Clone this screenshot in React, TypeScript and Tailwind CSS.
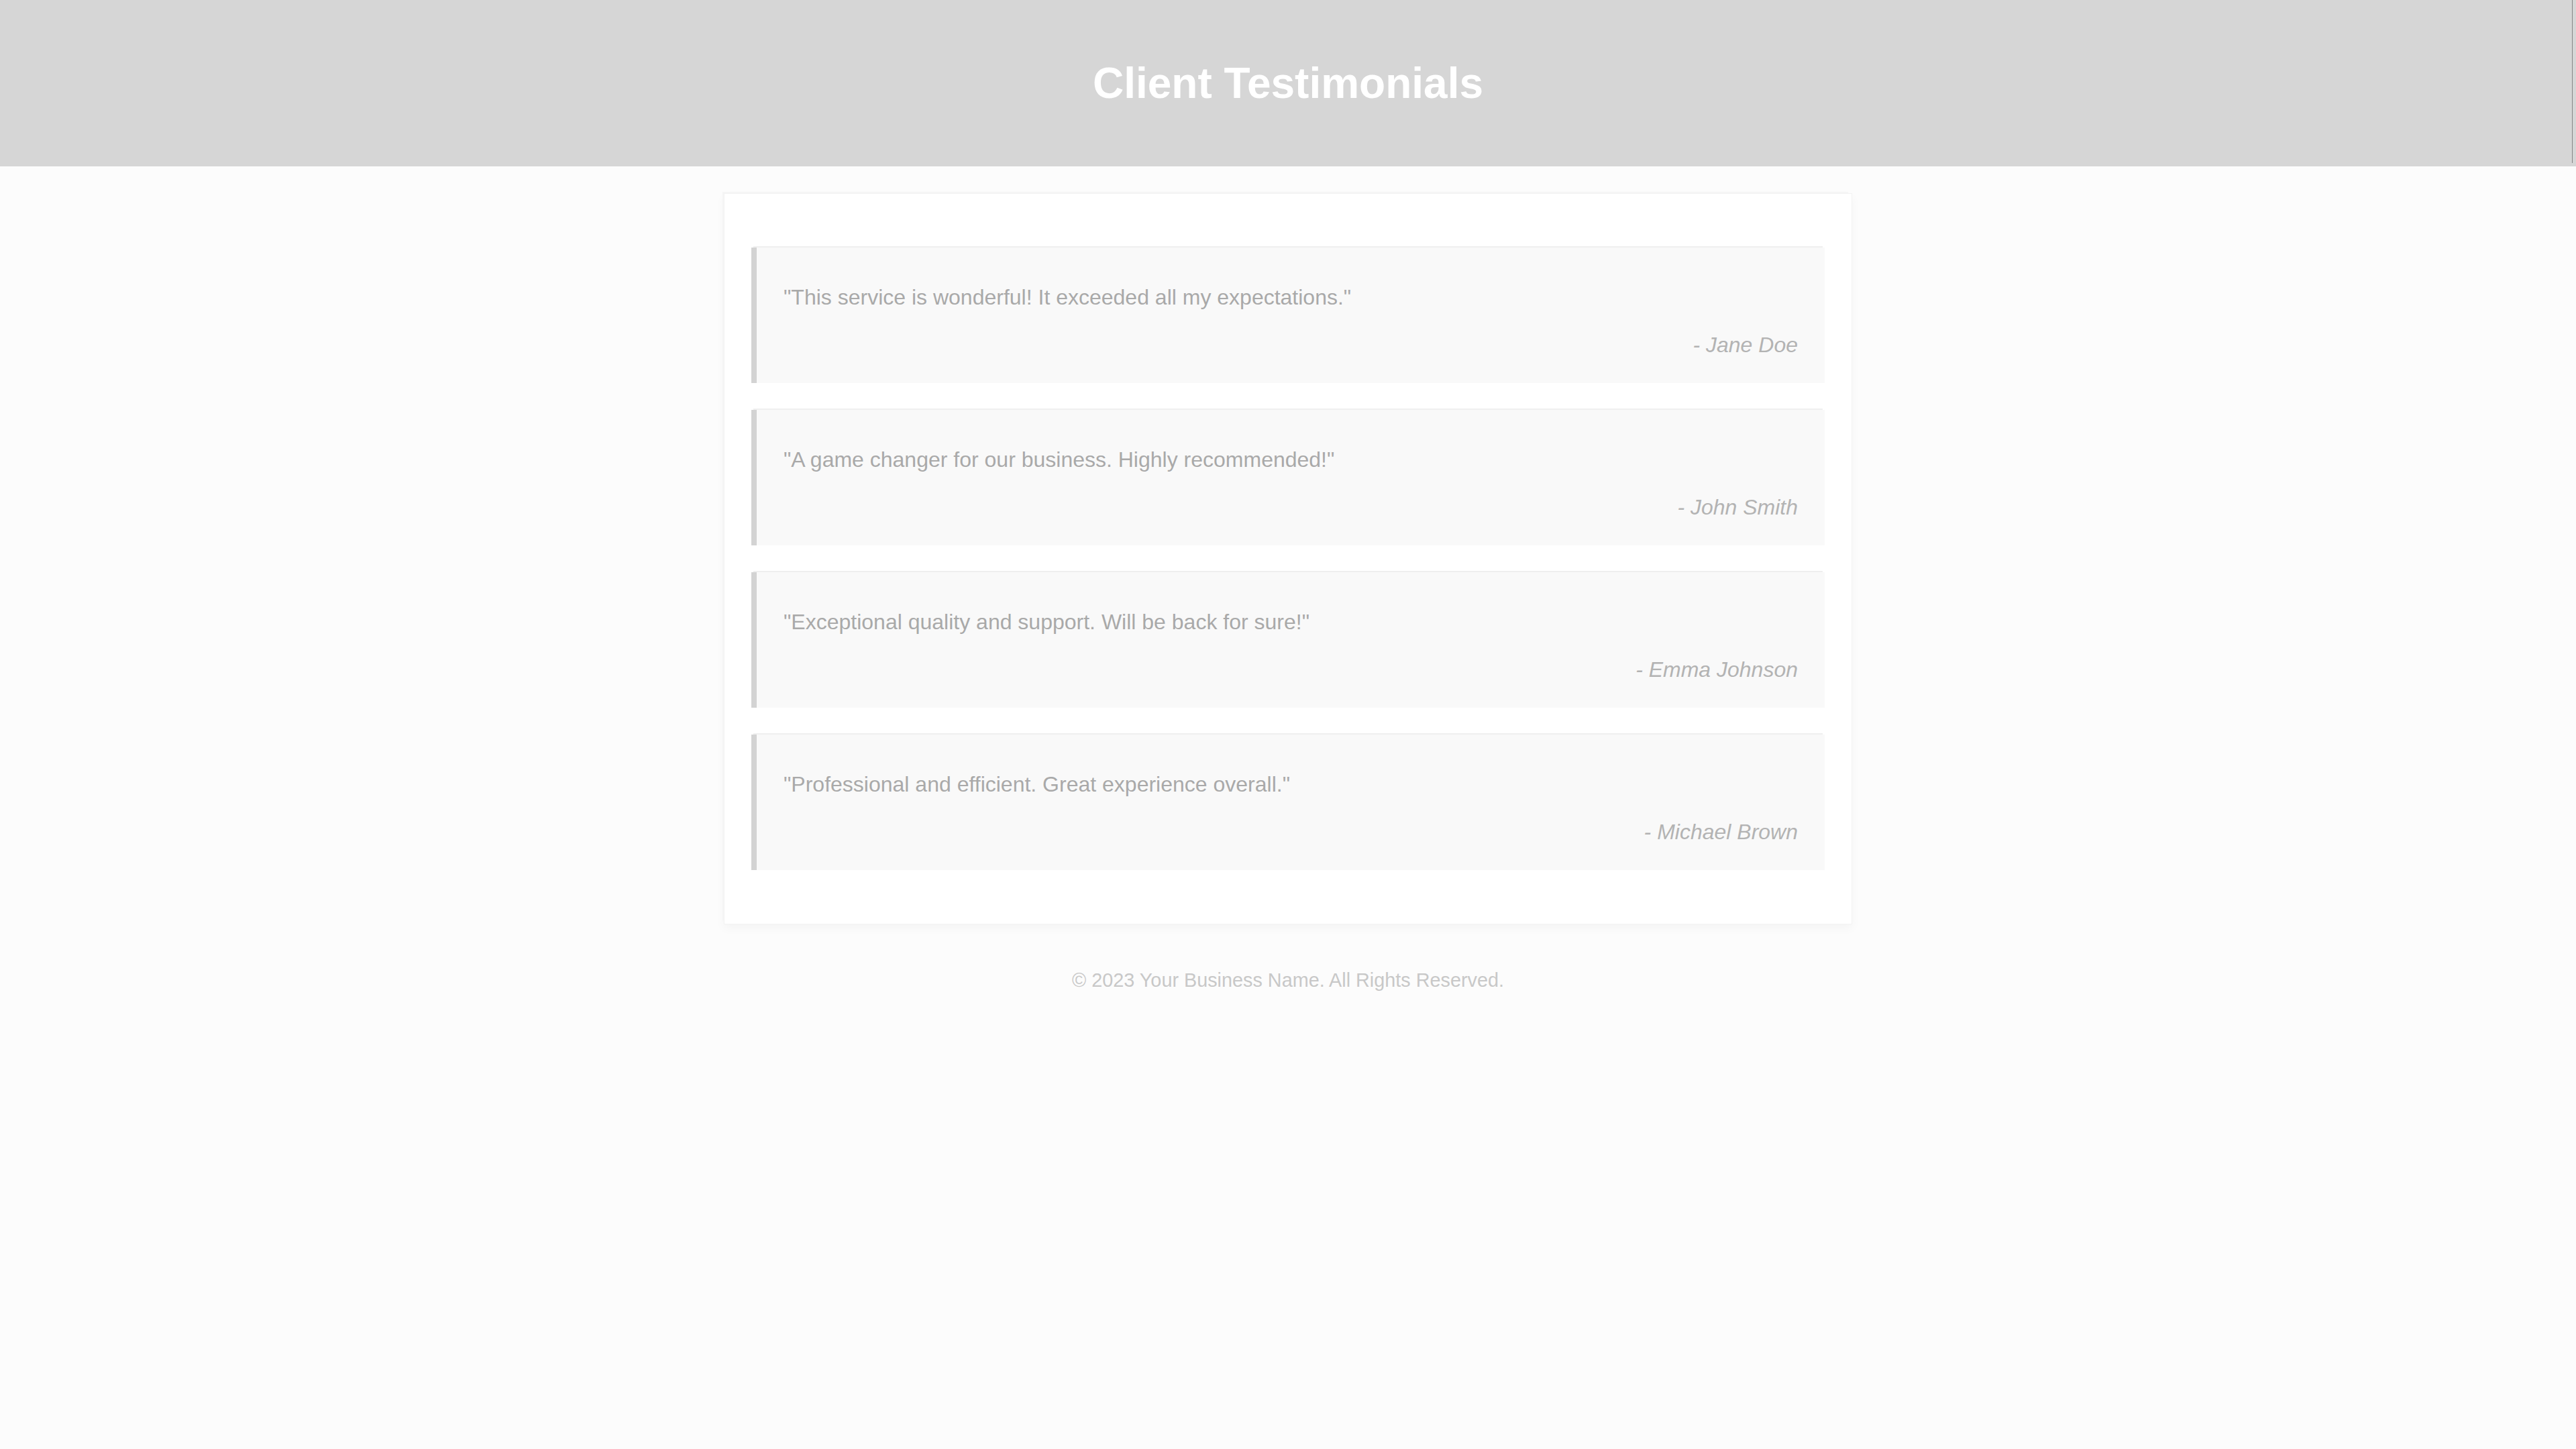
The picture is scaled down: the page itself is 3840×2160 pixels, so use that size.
import React from "react";

const testimonials = [
  { quote: "\"This service is wonderful! It exceeded all my expectations.\"", author: "- Jane Doe" },
  { quote: "\"A game changer for our business. Highly recommended!\"", author: "- John Smith" },
  { quote: "\"Exceptional quality and support. Will be back for sure!\"", author: "- Emma Johnson" },
  { quote: "\"Professional and efficient. Great experience overall.\"", author: "- Michael Brown" },
];

export default function App() {
  return (
    <div
      className="min-h-[2160px] w-full bg-[#fcfcfc]"
      style={{ fontFamily: '"Liberation Sans", Arial, sans-serif' }}
    >
      <header className="relative flex h-[248px] items-center justify-center bg-[#d6d6d6]">
        <h1 className="text-[64px] font-bold leading-normal text-white">Client Testimonials</h1>
        <div className="absolute right-[5px] top-0 h-[243px] w-px bg-[#858585]" />
      </header>

      <main className="mx-auto mt-[40px] flex w-[1682px] flex-col gap-10 border border-[#f3f3f3] bg-white px-10 py-20 shadow-[-4px_-4px_0_-2px_#f5f5f5,0_6px_14px_rgba(0,0,0,0.035)]">
        {testimonials.map((t) => (
          <div
            key={t.author}
            className="flex h-[202px] flex-col border-l-8 border-[#d3d3d3] bg-[#f9f9f9] pl-10 pr-10 pt-[56px] shadow-[0_-5px_0_-3px_#efefef]"
          >
            <p className="text-[32px] leading-[36px] text-[#a9a9a9]">{t.quote}</p>
            <p className="mt-[35px] text-right text-[32px] italic leading-[36px] text-[#b3b3b3]">
              {t.author}
            </p>
          </div>
        ))}
      </main>

      <footer className="mt-[62px] text-center text-[28.8px] leading-normal text-[#c8c8c8]">
        © 2023 Your Business Name. All Rights Reserved.
      </footer>
    </div>
  );
}
